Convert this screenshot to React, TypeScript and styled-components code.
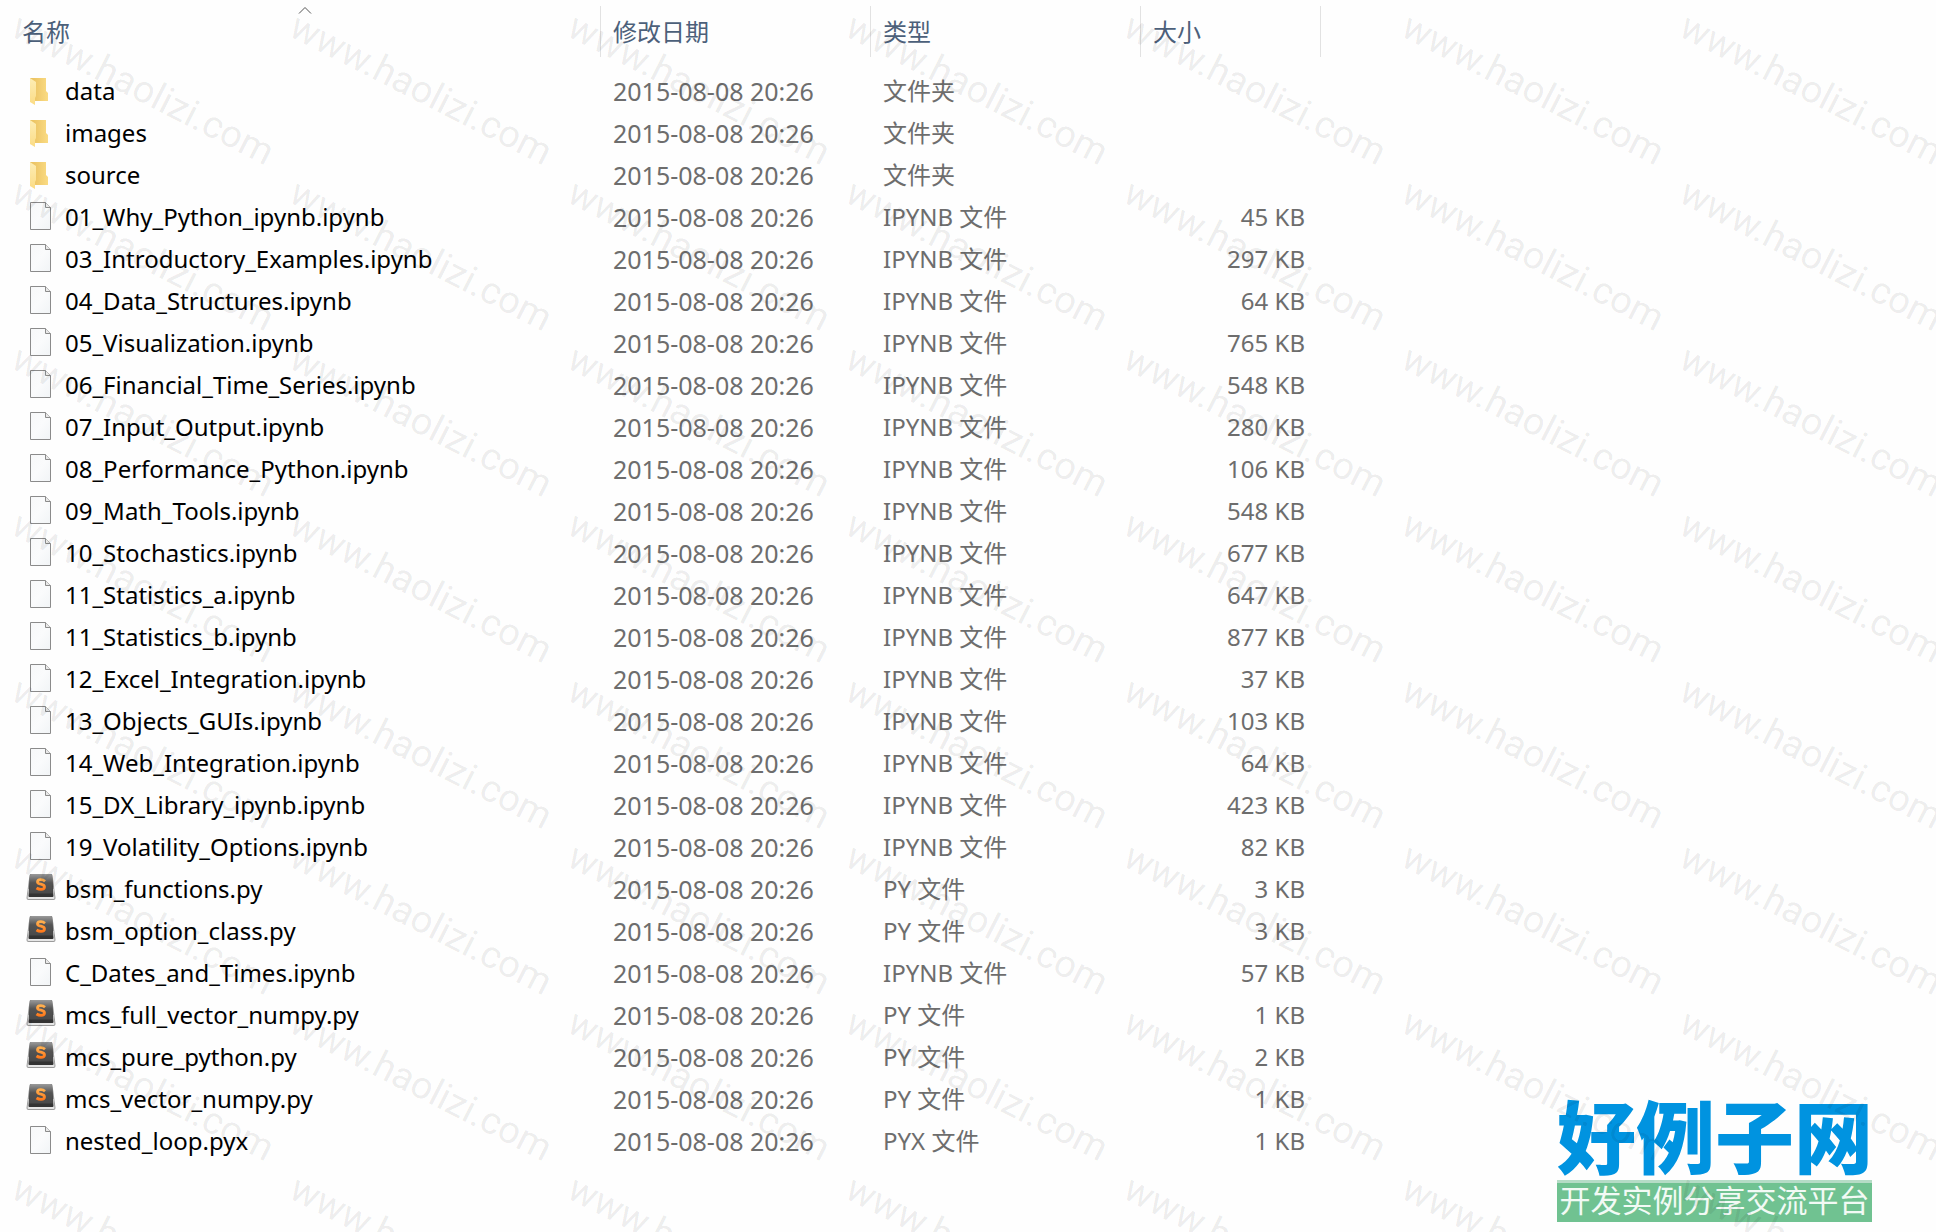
import React from "react";
import styled, { createGlobalStyle } from "styled-components";

const GlobalStyle = createGlobalStyle`
  *, *::before, *::after { box-sizing: border-box; }
  body {
    margin: 0;
    background: #fefefe;
    font-family: "Noto Sans", "Noto Sans CJK SC", sans-serif;
    font-size: 24px;
    color: #6d6d6d;
  }
`;

const Page = styled.main`
  position: relative;
  min-height: 100vh;
  overflow: hidden;
`;

const FileTable = styled.table`
  border-collapse: collapse;
  table-layout: fixed;
  width: 1321px;
`;

const Column = styled.col<{ $width: number }>`
  width: ${(p) => p.$width}px;
`;

const HeadCell = styled.th`
  height: 70px;
  padding: 6px 0 13px;
  font-weight: 400;
  text-align: left;
`;

const SortButton = styled.button<{ $first?: boolean }>`
  position: relative;
  display: flex;
  align-items: center;
  width: 100%;
  height: 51px;
  padding: 0 12px 2px ${(p) => (p.$first ? "22px" : "12px")};
  border: 0;
  border-right: 1px solid #e2e2e2;
  background: none;
  color: #4c607a;
  font-family: "Noto Sans CJK SC", sans-serif;
  font-size: 24px;
  line-height: 36px;
`;

const SortMark = styled.svg`
  position: absolute;
  top: 0;
  left: calc(50% - 2px);
  width: 14px;
  height: 8px;
`;

const Row = styled.tr`
  height: 42px;
`;

const Cell = styled.td`
  padding: 0 0 0 12px;
  line-height: 42px;
  white-space: pre;
`;

const DateCell = styled(Cell)`
  font-size: 25px;
`;

const SizeCell = styled(Cell)`
  padding: 0 16px 0 0;
  text-align: right;
`;

const NameCell = styled(Cell)`
  padding: 0 0 0 26px;
  color: #000;
`;

const NameLine = styled.div`
  display: flex;
  align-items: center;
  gap: 9px;
  height: 42px;
`;

const IconBox = styled.svg`
  flex: none;
  width: 30px;
  height: 30px;
  margin-bottom: 2px;
`;

const Brand = styled.aside`
  position: absolute;
  right: 64px;
  bottom: 10px;
  display: flex;
  flex-direction: column;
  width: 315px;
  font-family: "Noto Sans CJK SC", sans-serif;
  white-space: nowrap;
`;

const BrandName = styled.div`
  color: #0093e0;
  font-size: 79px;
  font-weight: 900;
  line-height: 92px;
`;

const BrandLine = styled.div`
  height: 42px;
  border-top: 3px solid #b5dcc6;
  background: #70c291;
  color: #f2faf5;
  font-size: 31px;
  line-height: 32px;
  text-align: center;
`;

const MarkLayer = styled.div`
  position: absolute;
  inset: 0 -278px 0 0;
  display: grid;
  grid-template-columns: repeat(auto-fill, 278px);
  grid-auto-rows: 166px;
  overflow: hidden;
  pointer-events: none;
`;

const Mark = styled.div`
  padding: 4px 0 0 9px;
  color: rgba(0, 0, 0, 0.08);
  font-family: Roboto, sans-serif;
  font-size: 38px;
  line-height: 36px;
  white-space: nowrap;
`;

const MarkText = styled.span`
  display: block;
  transform: rotate(27deg);
  transform-origin: 0 31px;
`;

type Kind = "folder" | "file" | "sublime";

const FolderIcon = () => (
  <IconBox viewBox="0 0 30 30" aria-hidden="true">
    <defs>
      <linearGradient id="folderBack" x1="0" x2="1">
        <stop offset="0" stopColor="#e9bf5d" />
        <stop offset="1" stopColor="#fadb83" />
      </linearGradient>
      <linearGradient id="folderFront" x1="0" x2="0" y1="0" y2="1">
        <stop offset="0" stopColor="#fdedb5" />
        <stop offset="1" stopColor="#fbdc85" />
      </linearGradient>
    </defs>
    <path d="M4 3h16v13l2 2v8H4z" fill="url(#folderBack)" />
    <path d="M4 3l6 4v14l-1 2v7l-5-3z" fill="url(#folderFront)" />
  </IconBox>
);

const FileIcon = () => (
  <IconBox viewBox="0 0 30 30" aria-hidden="true">
    <defs>
      <linearGradient id="paper" x1="0" x2="1" y1="0" y2="1">
        <stop offset="0" stopColor="#f7f8f9" />
        <stop offset="0.5" stopColor="#fafbfc" />
        <stop offset="1" stopColor="#f1f4f6" />
      </linearGradient>
    </defs>
    <path d="M4.500 1.500h15l5 5v22h-20z" fill="url(#paper)" stroke="#8b8b8b" />
    <path d="M19.500 1.500v5h5" fill="#e9e9e9" stroke="#8b8b8b" />
  </IconBox>
);

const SublimeIcon = () => (
  <IconBox viewBox="0 0 30 30" aria-hidden="true">
    <defs>
      <linearGradient id="keyTop" x1="0" x2="0" y1="0" y2="1">
        <stop offset="0" stopColor="#9a9a9a" />
        <stop offset="0.450" stopColor="#545454" />
        <stop offset="1" stopColor="#494949" />
      </linearGradient>
      <linearGradient id="keyLetter" x1="0" x2="0" y1="0" y2="1">
        <stop offset="0" stopColor="#ffb04f" />
        <stop offset="1" stopColor="#ff7a1c" />
      </linearGradient>
    </defs>
    <path d="M3.500 2Q4 1 5 1h20q1 0 1.500 1l3 23q0 2-2 2h-25q-2 0-2-2z" fill="#9b9b9b" />
    <path d="M2.500 16h25l1 9q0 1-1 1h-25q-1 0-1-1z" fill="#e6e6e6" />
    <path d="M4 2.500Q4 1.500 5 1.500h20q1 0 1 1L27.500 23q0 1-1 1h-23q-1 0-1-1z" fill="#333" />
    <path d="M4 2.500Q4 1 5.500 1h19q1.500 0 1.500 1.500l1 18H3z" fill="url(#keyTop)" />
    <path
      d="M19 8.200Q17 6.500 14.500 6.700q-3 .2-3 2.300 0 1.500 3.500 2.200 3.500.8 3.500 2.800 0 2.200-3.500 2.400-2.500 0-4.500-1.400"
      fill="none"
      stroke="url(#keyLetter)"
      strokeWidth="2.800"
    />
  </IconBox>
);

const icons: Record<Kind, () => React.ReactElement> = {
  folder: FolderIcon,
  file: FileIcon,
  sublime: SublimeIcon,
};

const entries: [string, string][] = [
  ["data", ""],
  ["images", ""],
  ["source", ""],
  ["01_Why_Python_ipynb.ipynb", "45 KB"],
  ["03_Introductory_Examples.ipynb", "297 KB"],
  ["04_Data_Structures.ipynb", "64 KB"],
  ["05_Visualization.ipynb", "765 KB"],
  ["06_Financial_Time_Series.ipynb", "548 KB"],
  ["07_Input_Output.ipynb", "280 KB"],
  ["08_Performance_Python.ipynb", "106 KB"],
  ["09_Math_Tools.ipynb", "548 KB"],
  ["10_Stochastics.ipynb", "677 KB"],
  ["11_Statistics_a.ipynb", "647 KB"],
  ["11_Statistics_b.ipynb", "877 KB"],
  ["12_Excel_Integration.ipynb", "37 KB"],
  ["13_Objects_GUIs.ipynb", "103 KB"],
  ["14_Web_Integration.ipynb", "64 KB"],
  ["15_DX_Library_ipynb.ipynb", "423 KB"],
  ["19_Volatility_Options.ipynb", "82 KB"],
  ["bsm_functions.py", "3 KB"],
  ["bsm_option_class.py", "3 KB"],
  ["C_Dates_and_Times.ipynb", "57 KB"],
  ["mcs_full_vector_numpy.py", "1 KB"],
  ["mcs_pure_python.py", "2 KB"],
  ["mcs_vector_numpy.py", "1 KB"],
  ["nested_loop.pyx", "1 KB"],
];

const describe = (name: string): { kind: Kind; label: string } => {
  const extension = name.split(".")[1];
  if (!extension) return { kind: "folder", label: "文件夹" };
  return {
    kind: extension === "py" ? "sublime" : "file",
    label: `${extension.toUpperCase()} 文件`,
  };
};

const columns = [
  { title: "名称", width: 601 },
  { title: "修改日期", width: 270 },
  { title: "类型", width: 270 },
  { title: "大小", width: 180 },
];

export default function App() {
  return (
    <>
      <GlobalStyle />
      <Page>
        <FileTable>
          <colgroup>
            {columns.map((c) => (
              <Column key={c.title} $width={c.width} />
            ))}
          </colgroup>
          <thead>
            <tr>
              {columns.map((c, i) => (
                <HeadCell key={c.title} scope="col" aria-sort={i === 0 ? "ascending" : undefined}>
                  <SortButton type="button" $first={i === 0}>
                    {c.title}
                    {i === 0 && (
                      <SortMark viewBox="0 0 14 8" aria-hidden="true">
                        <path d="M1 7.500l6-6 6 6" fill="none" stroke="#555" />
                      </SortMark>
                    )}
                  </SortButton>
                </HeadCell>
              ))}
            </tr>
          </thead>
          <tbody>
            {entries.map(([name, size]) => {
              const { kind, label } = describe(name);
              const Icon = icons[kind];
              return (
                <Row key={name}>
                  <NameCell>
                    <NameLine>
                      <Icon />
                      {name}
                    </NameLine>
                  </NameCell>
                  <DateCell>2015-08-08 20:26</DateCell>
                  <Cell>{label}</Cell>
                  <SizeCell>{size}</SizeCell>
                </Row>
              );
            })}
          </tbody>
        </FileTable>
        <Brand>
          <BrandName>好例子网</BrandName>
          <BrandLine>开发实例分享交流平台</BrandLine>
        </Brand>
        <MarkLayer aria-hidden="true">
          {Array.from({ length: 70 }, (_, i) => (
            <Mark key={i}>
              <MarkText>www.haolizi.com</MarkText>
            </Mark>
          ))}
        </MarkLayer>
      </Page>
    </>
  );
}
